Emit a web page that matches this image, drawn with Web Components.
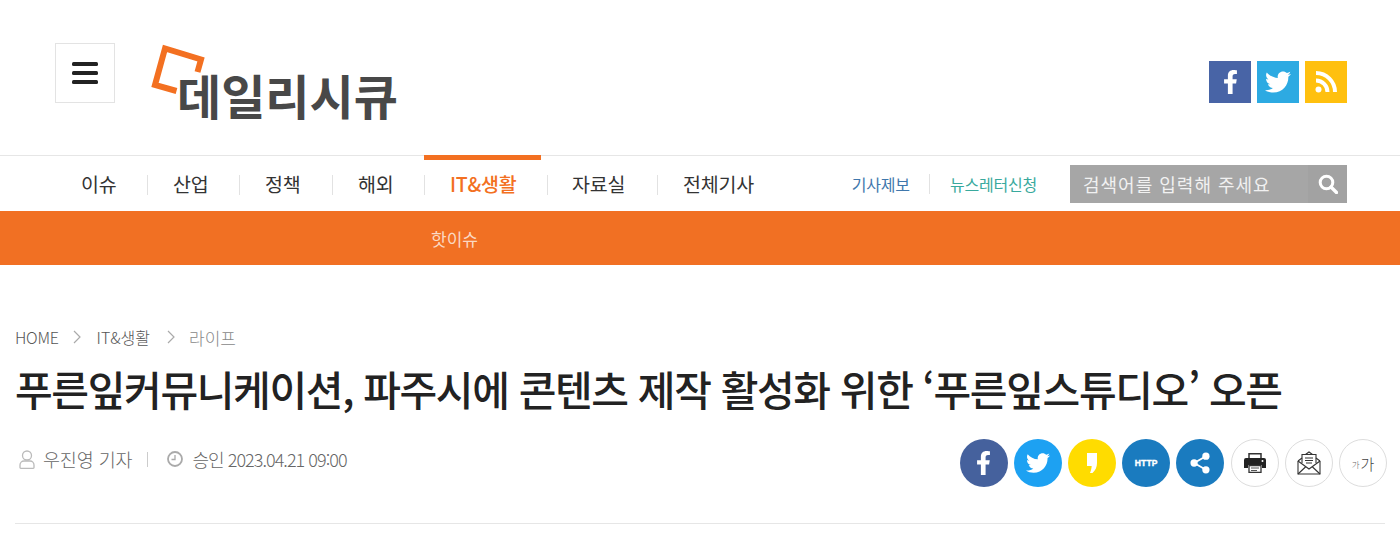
<!DOCTYPE html>
<html lang="ko"><head><meta charset="utf-8"><title>데일리시큐</title>
<style>
html,body{margin:0;padding:0;background:#fff;font-family:"Noto Sans CJK KR","Noto Sans",sans-serif;color:#222}
</style></head><body>
<site-header></site-header>
<main-nav></main-nav>
<sub-bar>핫이슈</sub-bar>
<article-head></article-head>
<script>
const FB='M279.14 288l14.22-92.66h-88.91v-60.13c0-25.35 12.42-50.06 52.24-50.06h40.42V6.26S260.43 0 225.36 0c-73.22 0-121.08 44.38-121.08 124.72v70.62H22.89V288h81.39v224h100.17V288z';
const TW='M459.37 151.716c.325 4.548.325 9.097.325 13.645 0 138.72-105.583 298.558-298.558 298.558-59.452 0-114.68-17.219-161.137-47.106 8.447.974 16.568 1.299 25.34 1.299 49.055 0 94.213-16.568 130.274-44.832-46.132-.975-84.792-31.188-98.112-72.772 6.498.974 12.995 1.624 19.818 1.624 9.421 0 18.843-1.3 27.614-3.573-48.081-9.747-84.143-51.98-84.143-102.985v-1.299c13.969 7.797 30.214 12.67 47.431 13.319-28.264-18.843-46.781-51.005-46.781-87.391 0-19.492 5.197-37.36 14.294-52.954 51.655 63.675 129.3 105.258 216.365 109.807-1.624-7.797-2.599-15.918-2.599-24.04 0-57.828 46.782-104.934 104.934-104.934 30.213 0 57.502 12.67 76.67 33.137 23.715-4.548 46.456-13.32 66.599-25.34-7.798 24.366-24.366 44.833-46.132 57.827 21.117-2.273 41.584-8.122 60.426-16.243-14.292 20.791-32.161 39.308-52.628 54.253z';
function def(name,html){customElements.define(name,class extends HTMLElement{constructor(){super();this.attachShadow({mode:'open'}).innerHTML=html;}});}

def('menu-button',`<style>:host{display:flex;width:58px;height:58px;border:1px solid #e3e3e3;align-items:center;justify-content:center}
svg{display:block}</style>
<svg width="26" height="22" viewBox="0 0 26 22" fill="#222"><rect y="0" width="26" height="4" rx="1.5"/><rect y="9" width="26" height="4" rx="1.5"/><rect y="18" width="26" height="4" rx="1.5"/></svg>`);

def('site-logo',`<style>:host{display:block;position:relative;width:250px;height:80px;margin-left:35px}
svg{position:absolute;left:0;top:0}
span{position:absolute;left:27px;top:20px;font:700 48px/62px "Noto Sans CJK KR",sans-serif;color:#484848;letter-spacing:0;white-space:nowrap}</style>
<span>데일리시큐</span>
<svg width="60" height="60" viewBox="150 43 60 60" fill="none" stroke="#f37021" stroke-width="6"><path d="M197.500 72 L201 59.500 L165 48.500 L155 85 L176.500 91"/></svg>`);

def('social-links',`<style>:host{display:flex;gap:6px}
a{width:42px;height:42px;display:flex;align-items:center;justify-content:center}
svg{display:block}</style>
<a style="background:#4864a6"><svg width="15" height="24" viewBox="0 0 320 512" fill="#fff"><path d="${FB}"/></svg></a>
<a style="background:#2daae2"><svg width="26" height="26" viewBox="0 0 512 512" fill="#fff"><path d="${TW}"/></svg></a>
<a style="background:#ffc00f"><svg width="24" height="24" viewBox="0 0 24 24" fill="none" stroke="#fff" stroke-width="4"><circle cx="4.500" cy="19.500" r="3" fill="#fff" stroke="none"/><path d="M2 10.500a11.500 11.500 0 0 1 11.500 11.500"/><path d="M2 3a19 19 0 0 1 19 19"/></svg></a>`);

def('site-header',`<style>:host{display:flex;align-items:flex-start;height:156px;box-sizing:border-box;padding:43px 53px 0 55px;border-bottom:1px solid #e6e6e6}
social-links{margin-left:auto;margin-top:18px}</style>
<menu-button></menu-button><site-logo></site-logo><social-links></social-links>`);

def('nav-item',`<style>:host{display:flex;box-sizing:border-box;height:55px;align-items:center;position:relative;font-size:19.5px;font-weight:400;color:#333;letter-spacing:-.2px;white-space:nowrap}
:host([active]){color:#f37021;font-weight:500}
:host([active])::before{content:"";position:absolute;left:0;right:6px;top:-1px;height:5px;background:#f37021}
:host(:not([last]))::after{content:"";position:absolute;right:-1px;top:19px;height:20px;width:1px;background:#e2e2e2}
</style><slot></slot>`);

def('main-nav',`<style>:host{display:flex;height:55px;padding:0 53px 0 55px;align-items:stretch}
nav-item{padding-left:26px}
.r{margin-left:auto;display:flex;align-items:center}
.a{font-size:16px;letter-spacing:-.2px;color:#3f77ac}
.b{font-size:16px;letter-spacing:-.2px;color:#39a99d}
.d{width:1px;height:20px;background:#e2e2e2;margin:0 20px 0 19px}
.s{display:flex;width:277px;height:38px;margin-left:33px;background:#a6a6a6;color:#f1f1f1}
.p{flex:1;padding-left:13px;font-size:18px;line-height:38px;letter-spacing:1px;white-space:nowrap}
.i{width:39px;background:#a2a2a2;display:flex;align-items:center;justify-content:center}</style>
<nav-item style="width:92px">이슈</nav-item><nav-item style="width:92px">산업</nav-item><nav-item style="width:93px">정책</nav-item><nav-item style="width:92px">해외</nav-item><nav-item active style="width:123px">IT&amp;생활</nav-item><nav-item style="width:110px;padding-left:25px">자료실</nav-item><nav-item last>전체기사</nav-item>
<div class="r"><span class="a">기사제보</span><span class="d"></span><span class="b">뉴스레터신청</span>
<div class="s"><span class="p">검색어를 입력해 주세요</span><span class="i"><svg width="20" height="20" viewBox="0 0 20 20" fill="none" stroke="#fff"><circle cx="8.500" cy="8.500" r="6.300" stroke-width="3"/><path d="M13 13l5.500 5.500" stroke-width="3.400" stroke-linecap="round"/></svg></span></div></div>`);

def('sub-bar',`<style>:host{display:flex;align-items:center;height:54px;background:#f17023;color:#fbd9c3;font-size:17px;padding-left:431px;box-sizing:border-box}</style><slot></slot>`);

def('share-btn',`<style>:host{display:flex;width:48px;height:48px;border-radius:50%;align-items:center;justify-content:center;box-sizing:border-box;background:var(--bg,#fff)}
:host([outline]){border:1px solid #ddd}svg{display:block}</style><slot></slot>`);

def('article-head',`<style>:host{display:block;padding:60px 15px 0 15px}
.crumb{display:flex;align-items:center;height:24px;font-size:16px;font-weight:300;color:#555}
.crumb svg.c1{margin:0 16px 0 14px}
.crumb svg.c2{margin:0 14px 0 17px}
.h{letter-spacing:-.3px}.t{letter-spacing:0}
.l{color:#888;font-size:17px}
h1{margin:11px 0 0;font-size:41px;line-height:56px;font-weight:500;letter-spacing:-1.37px;color:#222;white-space:nowrap}
.meta{display:flex;align-items:center;height:48px;margin-top:23px;font-size:18px;font-weight:300;color:#666}
.left{display:flex;align-items:center;margin-bottom:8px}
.meta svg{display:block}
.by{margin-left:8px;font-size:18.5px;letter-spacing:-.15px;white-space:nowrap}
.sep{width:1px;height:15px;background:#ccc;margin:0 19px 0 15px}
.dt{margin-left:9px;letter-spacing:-.95px;white-space:nowrap}
.share{margin-left:auto;margin-right:-2px;display:flex;gap:6.2px}
hr{border:0;border-top:1px solid #e6e6e6;margin:36px 0 0}
.big{font-size:15px;color:#444;line-height:1}
.sm{font-size:8.500px;color:#666;line-height:1;margin-top:3px;margin-right:1px}
</style>
<div class="crumb"><span class="h">HOME</span><svg class="c1" width="8" height="14" viewBox="0 0 8 14" fill="none" stroke="#aaa" stroke-width="1.200"><path d="M1 1l6 6-6 6"/></svg><span class="t">IT&amp;생활</span><svg class="c2" width="8" height="14" viewBox="0 0 8 14" fill="none" stroke="#aaa" stroke-width="1.200"><path d="M1 1l6 6-6 6"/></svg><span class="l">라이프</span></div>
<h1>푸른잎커뮤니케이션, 파주시에 콘텐츠 제작 활성화 위한 ‘푸른잎스튜디오’ 오픈</h1>
<div class="meta"><div class="left">
<svg style="margin-left:4px" width="16" height="19" viewBox="0 0 16 19" fill="none" stroke="#bbb" stroke-width="1.300"><circle cx="8" cy="5.500" r="4.500"/><path d="M1 17.500v-2.500a4 4 0 0 1 4-4h6a4 4 0 0 1 4 4v2.500a.8.8 0 0 1-.8.800H1.800a.8.8 0 0 1-.8-.8z"/></svg>
<span class="by">우진영 기자</span><span class="sep"></span>
<svg width="16" height="16" viewBox="0 0 16 16" fill="none" stroke="#aaa"><circle cx="8" cy="8" r="7" stroke-width="1.800"/><path d="M8 4v4.500H4.500" stroke-width="1.300"/></svg>
<span class="dt">승인 2023.04.21 09:00</span></div>
<div class="share">
<share-btn style="--bg:#45619d"><svg width="15" height="24" viewBox="0 0 320 512" fill="#fff"><path d="${FB}"/></svg></share-btn>
<share-btn style="--bg:#1da1f2"><svg width="24" height="24" viewBox="0 0 512 512" fill="#fff"><path d="${TW}"/></svg></share-btn>
<share-btn style="--bg:#ffdc00"><svg width="10" height="20" viewBox="0 0 10 20" fill="#fff"><path d="M0 0h10v10c0 4-1.500 7-4.500 10H3c1-2.500 1.500-4.500 1.700-7H0z"/></svg></share-btn>
<share-btn style="--bg:#1a7bbf"><span style="font:700 8.500px/1 'Liberation Sans',sans-serif;color:#fff;letter-spacing:.2px;-webkit-text-stroke:.4px #fff">HTTP</span></share-btn>
<share-btn style="--bg:#1a7bbf"><svg width="20" height="22" viewBox="0 0 22 24" fill="#fff" stroke="#fff"><circle cx="4.500" cy="12" r="4" stroke="none"/><circle cx="17.500" cy="4.500" r="4" stroke="none"/><circle cx="17.500" cy="19.500" r="4" stroke="none"/><path d="M17.500 4.500L4.500 12l13 7.500" fill="none" stroke-width="2"/></svg></share-btn>
<share-btn outline><svg width="22" height="20" viewBox="0 0 22 20"><path d="M5 .7h12v5H5z" fill="none" stroke="#333" stroke-width="1.500"/><path d="M2 5h18a2 2 0 0 1 2 2v8h-4v-3H4v3H0V7a2 2 0 0 1 2-2z" fill="#222"/><path d="M5 12.500h12V19.500H5z" fill="#fff" stroke="#333" stroke-width="1.300"/><path d="M7 15h8M7 17.500h6" stroke="#555"/><circle cx="18.500" cy="8" r="1" fill="#fff"/></svg></share-btn>
<share-btn outline><svg width="24" height="24" viewBox="0 0 24 24" fill="none" stroke="#333" stroke-width="1.100"><path d="M1 10l4-3M23 10l-4-3M8.500 3.500L12 1l3.500 2.500"/><path d="M5 12V3.500h14V12"/><path d="M1 10v13h22V10"/><path d="M1 10l11 8 11-8M1 23l8-7.500M23 23l-8-7.500"/><path d="M8 7h8M8 9.500h8M9 12h6"/></svg></share-btn>
<share-btn outline><span class="sm">가</span><span class="big">가</span></share-btn>
</div></div>
<hr>`);
</script></body></html>
